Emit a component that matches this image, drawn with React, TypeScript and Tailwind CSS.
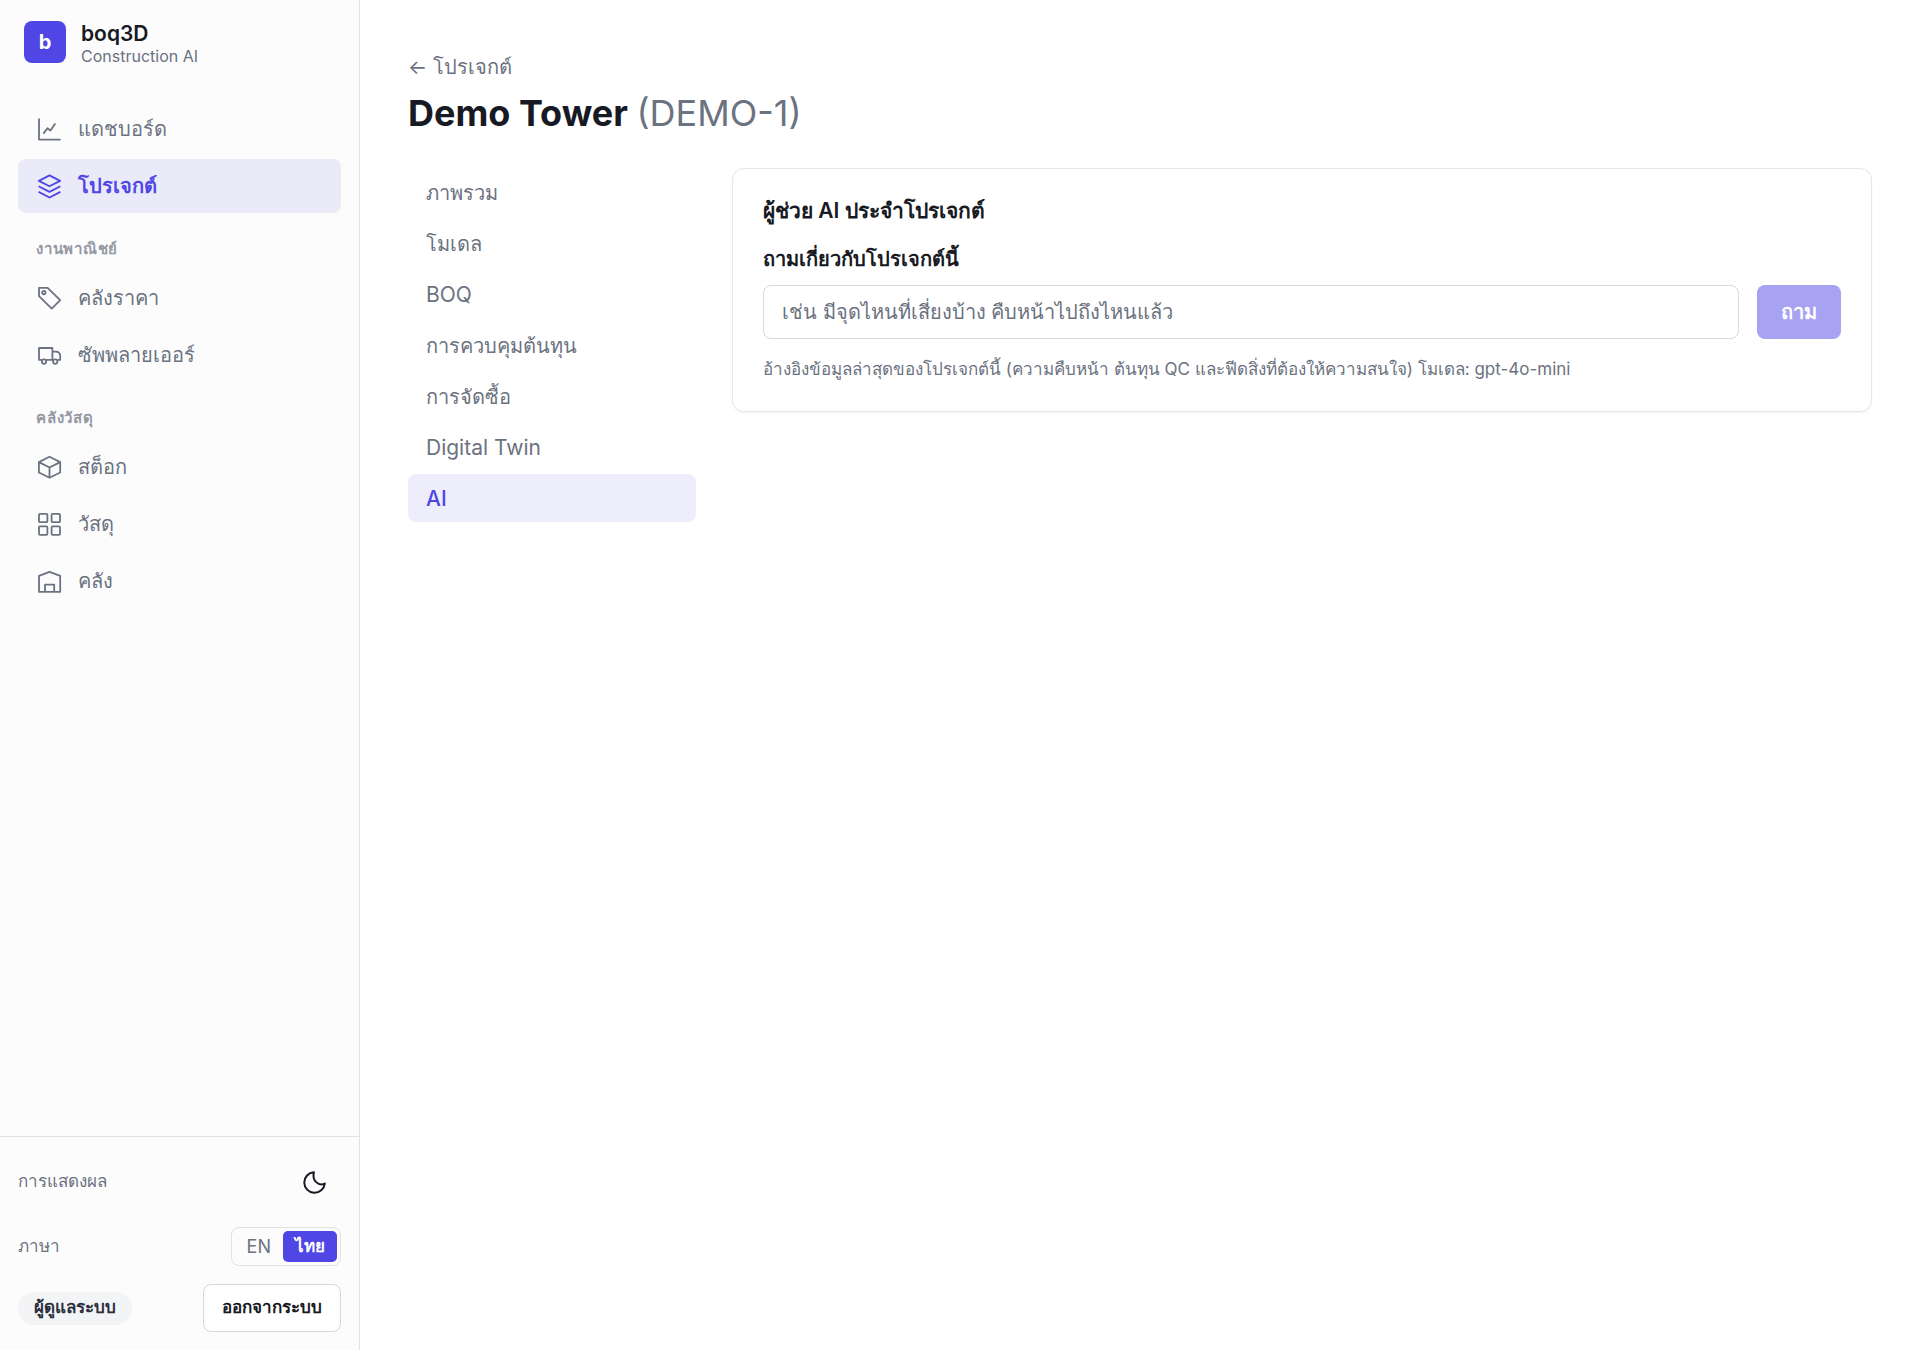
import React from "react";

type NavItem = {
  label: string;
  icon: React.ReactNode;
  active?: boolean;
};

type NavGroup = {
  title?: string;
  items: NavItem[];
};

const Icon = ({ children }: { children: React.ReactNode }) => (
  <svg
    viewBox="0 0 27 27"
    fill="none"
    stroke="currentColor"
    strokeWidth="1.8"
    strokeLinejoin="round"
    aria-hidden="true"
    className="size-[27px] shrink-0"
  >
    {children}
  </svg>
);

const groups: NavGroup[] = [
  {
    items: [
      {
        label: "แดชบอร์ด",
        icon: (
          <Icon>
            <path d="M3 2.4v21.2h21.6" />
            <path d="M7.4 17.6l4-5.4 3 2.3 4.9-7.1" />
          </Icon>
        ),
      },
      {
        label: "โปรเจกต์",
        active: true,
        icon: (
          <Icon>
            <path d="M13.5 2.4l10.6 5.5-10.6 5.4L2.9 7.9z" />
            <path d="M2.6 13.3l10.9 5.6 10.9-5.6" />
            <path d="M2.6 18.9l10.9 5.6 10.9-5.6" />
          </Icon>
        ),
      },
    ],
  },
  {
    title: "งานพาณิชย์",
    items: [
      {
        label: "คลังราคา",
        icon: (
          <Icon>
            <path d="M3 2.8h8.6l12.6 12.4-8.5 8.4L3 11.2z" />
            <circle cx="7.8" cy="7.6" r="1.7" />
          </Icon>
        ),
      },
      {
        label: "ซัพพลายเออร์",
        icon: (
          <Icon>
            <path d="M5.8 17.8H3V6h13.4v11.8h-6.2" />
            <path d="M16.4 9.6h3.2c2.7 0 4.6 1.8 4.6 4.6v3.6h-2.8" />
            <circle cx="8" cy="19.6" r="2.2" />
            <circle cx="19.2" cy="19.6" r="2.2" />
          </Icon>
        ),
      },
    ],
  },
  {
    title: "คลังวัสดุ",
    items: [
      {
        label: "สต็อก",
        icon: (
          <Icon>
            <path d="M13.5 2.8l10.7 5.3v10.4l-10.7 5.3L2.9 18.5V8.1z" />
            <path d="M2.9 8.1l10.6 5.4 10.7-5.4M13.5 13.5v10.3" />
          </Icon>
        ),
      },
      {
        label: "วัสดุ",
        icon: (
          <Icon>
            <rect x="3" y="2.8" width="8.4" height="8.4" rx="1" />
            <rect x="15.6" y="2.8" width="8.4" height="8.4" rx="1" />
            <rect x="3" y="15.4" width="8.4" height="8.4" rx="1" />
            <rect x="15.6" y="15.4" width="8.4" height="8.4" rx="1" />
          </Icon>
        ),
      },
      {
        label: "คลัง",
        icon: (
          <Icon>
            <path d="M3 23.8V7.8l10.5-4 10.7 4v16z" />
            <path d="M9 23.8v-7.2h9.2v7.2" />
          </Icon>
        ),
      },
    ],
  },
];

const tabs = [
  { label: "ภาพรวม", lang: "th" },
  { label: "โมเดล", lang: "th" },
  { label: "BOQ", lang: "en" },
  { label: "การควบคุมต้นทุน", lang: "th" },
  { label: "การจัดซื้อ", lang: "th" },
  { label: "Digital Twin", lang: "en" },
  { label: "AI", lang: "en", active: true },
];

const Sidebar = () => {
  return (
    <aside className="sticky top-0 flex h-screen w-[360px] shrink-0 flex-col border-r border-[#e1e2e6] bg-[#fcfcfd]">
      <div className="flex h-[84px] items-center gap-[15px] px-6">
        <div className="flex size-[42px] items-center justify-center rounded-lg bg-[#4f46e5] text-[20px] font-bold text-white">
          b
        </div>
        <div className="pt-1">
          <div className="text-[21px] leading-6 font-semibold text-[#171923]">
            boq3D
          </div>
          <div className="text-[16px] leading-5 text-[#6b7280]">
            Construction AI
          </div>
        </div>
      </div>

      <nav className="flex flex-1 flex-col px-[18px] pt-[18px]">
        {groups.map((group, index) => (
          <div key={index}>
            {group.title && (
              <h2 className="flex h-[58px] items-center px-[18px] pt-[14px] text-[15px] font-semibold tracking-wider text-[#9398a3]">
                {group.title}
              </h2>
            )}
            <ul className="flex flex-col gap-[3px]">
              {group.items.map((item) => (
                <li key={item.label}>
                  <a
                    href="#"
                    className={`flex h-[54px] items-center gap-[15px] rounded-lg px-[18px] text-[20px] ${
                      item.active
                        ? "bg-[#ebeaf9] font-semibold text-[#4f46e5]"
                        : "text-[#6b7280]"
                    }`}
                  >
                    {item.icon}
                    {item.label}
                  </a>
                </li>
              ))}
            </ul>
          </div>
        ))}
      </nav>

      <div className="flex flex-col gap-[18px] border-t border-[#e1e2e6] p-[18px] text-[17px]">
        <div className="flex items-center justify-between">
          <span className="text-[#6b7280]">การแสดงผล</span>
          <button
            type="button"
            aria-label="การแสดงผล"
            className="flex size-[54px] items-center justify-center text-[#171923]"
          >
            <svg
              viewBox="0 0 27 27"
              fill="none"
              stroke="currentColor"
              strokeWidth="2"
              strokeLinejoin="round"
              aria-hidden="true"
              className="size-[27px]"
            >
              <path d="M12.9 3.2A10.3 10.3 0 1 0 23.8 14.6C17.5 17.4 10.8 11.6 12.9 3.2z" />
            </svg>
          </button>
        </div>
        <div className="flex items-center justify-between">
          <span className="text-[#6b7280]">ภาษา</span>
          <div className="flex h-[39px] items-center rounded-lg border border-[#e1e2e6] p-[3px]">
            <button
              type="button"
              className="h-full px-3 text-[18px] text-[#6b7280]"
            >
              EN
            </button>
            <button
              type="button"
              className="flex h-full items-center rounded-[5px] bg-[#4f46e5] px-3 font-semibold text-white"
            >
              ไทย
            </button>
          </div>
        </div>
        <div className="flex items-center justify-between">
          <span className="flex h-[33px] items-center rounded-full bg-[#f3f4f6] px-4 font-semibold text-[#2b2f3d]">
            ผู้ดูแลระบบ
          </span>
          <button
            type="button"
            className="h-12 rounded-lg border border-[#d6d8dd] bg-white px-[18px] font-semibold text-[#171923]"
          >
            ออกจากระบบ
          </button>
        </div>
      </div>
    </aside>
  );
};

const AssistantCard = () => {
  return (
    <section className="min-w-0 flex-1 rounded-xl border border-[#e5e7eb] bg-white p-[30px] shadow-xs">
      <h2 className="text-[21px] leading-6 font-semibold text-[#171923]">
        ผู้ช่วย AI ประจำโปรเจกต์
      </h2>
      <form>
        <label
          htmlFor="question"
          className="mt-6 block text-[20px] leading-6 font-semibold text-[#171923]"
        >
          ถามเกี่ยวกับโปรเจกต์นี้
        </label>
        <div className="mt-[14px] flex gap-[18px]">
          <input
            id="question"
            type="text"
            placeholder="เช่น มีจุดไหนที่เสี่ยงบ้าง คืบหน้าไปถึงไหนแล้ว"
            className="h-[54px] min-w-0 flex-1 rounded-lg border border-[#d9dbe0] bg-white px-[18px] text-[20px] text-[#171923] placeholder:text-[#6b7280]"
          />
          <button
            type="submit"
            disabled
            className="h-[54px] rounded-lg bg-[#a7a2f2] px-6 text-[20px] font-semibold text-white"
          >
            ถาม
          </button>
        </div>
      </form>
      <p className="mt-[18px] text-[17px] leading-6 text-[#6b7280]">
        อ้างอิงข้อมูลล่าสุดของโปรเจกต์นี้ (ความคืบหน้า ต้นทุน QC
        และฟีดสิ่งที่ต้องให้ความสนใจ) โมเดล: gpt-4o-mini
      </p>
    </section>
  );
};

export default function App() {
  return (
    <div className="flex min-h-screen bg-white font-['Inter',sans-serif]">
      <Sidebar />
      <main className="min-w-0 flex-1 px-12 pt-[54px]">
        <a href="#" className="block text-[20px] leading-[27px] text-[#6b7280]">
          ← โปรเจกต์
        </a>
        <h1 className="mt-2 text-[36px] leading-12 font-bold text-[#171923]">
          Demo Tower{" "}
          <span className="font-normal text-[#6b7280]">(DEMO-1)</span>
        </h1>
        <div className="mt-[31px] flex items-start gap-9">
          <nav className="flex w-72 shrink-0 flex-col gap-[3px]">
            {tabs.map((tab) => (
              <a
                key={tab.label}
                href="#"
                lang={tab.lang}
                className={`flex h-12 items-center rounded-lg px-[18px] pt-px ${
                  tab.lang === "th" ? "text-[20px]" : "text-[21px]"
                } ${
                  tab.active
                    ? "bg-[#ededfb] font-medium text-[#4f46e5]"
                    : "text-[#6b7280]"
                }`}
              >
                {tab.label}
              </a>
            ))}
          </nav>
          <AssistantCard />
        </div>
      </main>
    </div>
  );
}
